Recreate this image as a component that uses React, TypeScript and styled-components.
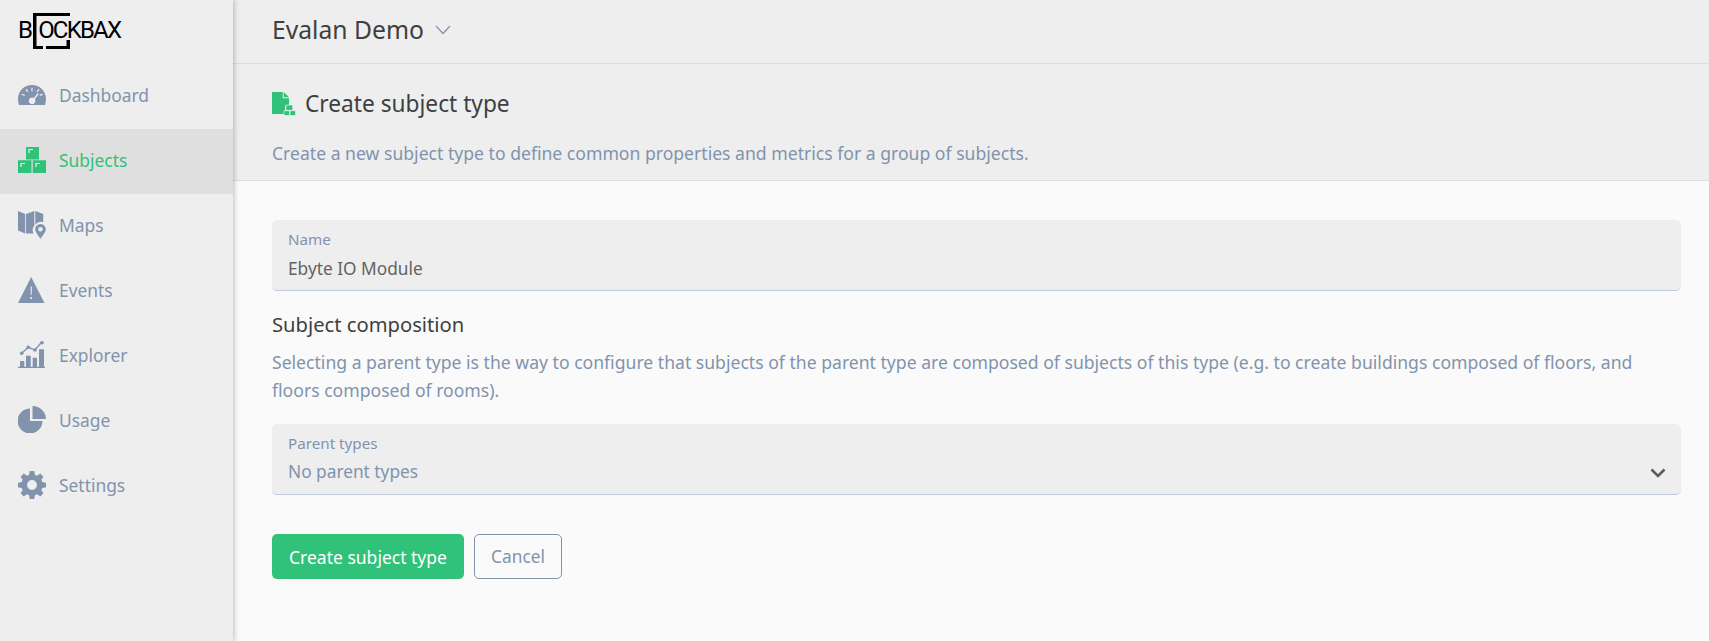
import React from 'react';
import styled, { createGlobalStyle } from 'styled-components';

const Global = createGlobalStyle`
	html, body {
		margin: 0;
		padding: 0;
		height: 100%;
		background: #fafafa;
		overflow: hidden;
	}
	* {
		box-sizing: border-box;
	}
	body {
		font-family: 'Noto Sans', 'Open Sans', sans-serif;
	}
`;

const GREY = '#8193ad';
const GREEN = '#2fc278';

const DashboardIcon = () => (
	<svg width='28' height='20' viewBox='0 0 28 20' fill='currentColor'>
		<path
			fillRule='evenodd'
			d='M14 0C6.3 0 0 6.2 0 13.8c0 2.2.4 4.2 1 6.2h26c.6-2 1-4 1-6.2C28 6.2 21.7 0 14 0zm-.6 2.8h1.200v3.400h-1.200zM7.400 4.400l1-.7 2 2.800-1 .7zm13.200-.7 1 .7-2 2.800-1-.7zM3.300 9.800l.4-1.100 3.200 1.100-.4 1.100zm21.400-1.100.4 1.100-3.200 1.100-.4-1.100zM15.900 13.100l3.700-5 1.100.8-3.700 5c.2.400.3.800.3 1.200a3.300 3.300 0 1 1-1.400-2z'
		/>
	</svg>
);

const SubjectsIcon = () => (
	<svg width='28' height='26' viewBox='0 0 28 26' fill='currentColor'>
		<path d='M8 0h13v12.500H8zM0 13.200h13.500V26H0zM14.700 13.200H28V26H14.700z' />
		<path
			d='M11 6V2.500h4M3 20v-3.500h4M18 20v-3.500h4'
			fill='none'
			stroke='#e6f5ec'
			strokeWidth='1.200'
		/>
	</svg>
);

const MapsIcon = () => (
	<svg width='28' height='28' viewBox='0 0 28 28' fill='currentColor'>
		<path d='M0 0l7.200 3v19.500L0 19.500zM8 3L16.300 0v14.600a7 7 0 0 0-.7 8L8 22.500zM17.300 0l7.900 3v8.200a7 7 0 0 0-7.900 2.800z' />
		<path
			fillRule='evenodd'
			d='M22.500 13a5.300 5.300 0 0 0-5.300 5.300c0 3 3.400 6.700 5.300 9.500 1.900-2.800 5.300-6.500 5.300-9.500A5.300 5.300 0 0 0 22.500 13zm0 3a2.300 2.300 0 1 1 0 4.600 2.300 2.300 0 0 1 0-4.600z'
		/>
	</svg>
);

const EventsIcon = () => (
	<svg width='27' height='26' viewBox='0 0 27 26' fill='currentColor'>
		<path
			fillRule='evenodd'
			d='M13.200 0L26.500 26H0zM12.600 9.500l.2 8.500h.9l.2-8.500zM13.200 20a1.100 1.100 0 1 0 0 2.200 1.100 1.100 0 0 0 0-2.200z'
		/>
	</svg>
);

const ExplorerIcon = () => (
	<svg width='28' height='27' viewBox='0 0 28 27' fill='currentColor'>
		<path d='M2 20h4.300v5.700H2zM8 14.700h4.700v11H8zM14.700 16.700H19v9h-4.300zM21 8.300h5v17.400h-5zM0 25.700h27V27H0z' />
		<path d='M3.700 12.300l6.600-6L17 9l6.700-8' fill='none' stroke='currentColor' strokeWidth='1.300' />
		<circle cx='3.700' cy='12.300' r='1.800' />
		<circle cx='10.300' cy='6.300' r='1.800' />
		<circle cx='17' cy='9' r='1.800' />
		<circle cx='24' cy='1.800' r='1.800' />
	</svg>
);

const UsageIcon = () => (
	<svg width='28' height='27' viewBox='0 0 28 27' fill='currentColor'>
		<path d='M12 2.500V15h12.500A12.500 12.500 0 1 1 12 2.500z' />
		<path d='M14.500 0A13.500 13.500 0 0 1 28 13h-13.500z' />
	</svg>
);

const SettingsIcon = () => (
	<svg width='28' height='28' viewBox='0 0 24 24' fill='currentColor'>
		<path
			fillRule='evenodd'
			d='M13.900 0l.6 3.200c.7.200 1.300.5 1.900.8l2.700-1.800 2.700 2.700-1.800 2.700c.3.600.6 1.200.8 1.900l3.200.6v3.800l-3.200.6c-.2.700-.5 1.300-.8 1.900l1.800 2.700-2.700 2.700-2.700-1.800c-.6.300-1.200.6-1.900.8l-.6 3.200h-3.800l-.6-3.200c-.7-.2-1.300-.5-1.900-.8l-2.700 1.800-2.700-2.700 1.800-2.700c-.3-.6-.6-1.200-.8-1.900L0 13.900v-3.800l3.200-.6c.2-.7.500-1.300.8-1.900L2.200 4.900l2.700-2.700 2.700 1.800c.6-.3 1.200-.6 1.900-.8l.6-3.200zM12 7.800a4.200 4.200 0 1 0 0 8.400 4.200 4.200 0 0 0 0-8.400z'
		/>
	</svg>
);

const NAV_ITEMS = [
	{ label: 'Dashboard', icon: <DashboardIcon /> },
	{ label: 'Subjects', icon: <SubjectsIcon />, active: true },
	{ label: 'Maps', icon: <MapsIcon /> },
	{ label: 'Events', icon: <EventsIcon /> },
	{ label: 'Explorer', icon: <ExplorerIcon /> },
	{ label: 'Usage', icon: <UsageIcon /> },
	{ label: 'Settings', icon: <SettingsIcon /> },
];

const App: React.FC = () => {
	return (
		<Page>
			<Global />
			<Sidebar>
				<Logo>
					<LogoBracket width='37' height='36' viewBox='0 0 37 36'>
						<path d='M0 0h37v3H3.500v30H10v3H0z' fill='#000' />
						<path d='M13 33h20.500v-6H37v9H13z' fill='#000' />
					</LogoBracket>
					<LogoText>B</LogoText>
					<LogoGap />
					<LogoText>OCKBAX</LogoText>
				</Logo>
				<Nav>
					{NAV_ITEMS.map(item => (
						<NavItem key={item.label} $active={item.active}>
							<NavIcon>{item.icon}</NavIcon>
							<NavLabel>{item.label}</NavLabel>
						</NavItem>
					))}
				</Nav>
			</Sidebar>
			<Main>
				<TopBar>
					<OrgName>Evalan Demo</OrgName>
					<svg width='16' height='10' viewBox='0 0 16 10' fill='none' stroke={GREY} strokeWidth='1.200'>
						<path d='M1 1l7 7.500L15 1' />
					</svg>
				</TopBar>
				<PageHeader>
					<TitleRow>
						<svg width='24' height='24' viewBox='0 0 24 24' fill={GREEN}>
							<path d='M0 0h10.700v6.300H17V14h-4v8H0z' />
							<path d='M11.700 0L17 5.300h-5.300z' />
							<path
								d='M14 13h6.700v5.300H14zM12 18.700h5.500v4.800H12zM18 18.700h5.500v4.800H18z'
								stroke='#eee'
								strokeWidth='.7'
							/>
						</svg>
						<Title>Create subject type</Title>
					</TitleRow>
					<Subtitle>
						Create a new subject type to define common properties and metrics for a group of subjects.
					</Subtitle>
				</PageHeader>
				<Content>
					<Field>
						<FieldLabel>Name</FieldLabel>
						<FieldValue>Ebyte IO Module</FieldValue>
					</Field>
					<SectionTitle>Subject composition</SectionTitle>
					<Help>
						Selecting a parent type is the way to configure that subjects of the parent type are composed of
						subjects of this type (e.g. to create buildings composed of floors, and floors composed of rooms).
					</Help>
					<SelectField>
						<FieldLabel>Parent types</FieldLabel>
						<FieldValue $placeholder>No parent types</FieldValue>
						<SelectArrow width='16' height='10' viewBox='0 0 16 10' fill='none' stroke='#5c5c5c' strokeWidth='2.600'>
							<path d='M1.500 1.500L8 8l6.500-6.500' />
						</SelectArrow>
					</SelectField>
					<Actions>
						<PrimaryButton>Create subject type</PrimaryButton>
						<OutlineButton>Cancel</OutlineButton>
					</Actions>
				</Content>
			</Main>
		</Page>
	);
};

export default App;

const Page = styled.div`
	display: flex;
	width: 100%;
	height: 100vh;
	background: #fafafa;
`;

const Sidebar = styled.aside`
	position: relative;
	z-index: 1;
	flex: 0 0 233px;
	background: #eee;
	box-shadow: 1px 0 5px rgba(0, 0, 0, 0.25);
`;

const Logo = styled.div`
	position: relative;
	display: flex;
	align-items: center;
	height: 56px;
	padding: 0 0 0 18px;
	color: #000;
`;

const LogoBracket = styled.svg`
	position: absolute;
	left: 33px;
	top: 13px;
`;

const LogoText = styled.span`
	font-family: 'Roboto', sans-serif;
	font-size: 24px;
	letter-spacing: -1.800px;
	line-height: 1;
	margin-top: 4px;
`;

const LogoGap = styled.span`
	width: 7px;
`;

const Nav = styled.nav`
	display: flex;
	flex-direction: column;
	margin-top: 8px;
`;

const NavItem = styled.div<{ $active?: boolean }>`
	display: flex;
	align-items: center;
	height: 65px;
	padding: 0 0 4px 18px;
	background: ${p => (p.$active ? '#dfdfdf' : 'transparent')};
	color: ${p => (p.$active ? GREEN : GREY)};
`;

const NavIcon = styled.span`
	display: flex;
	align-items: center;
	width: 41px;
`;

const NavLabel = styled.span`
	font-size: 17.400px;
`;

const Main = styled.main`
	flex: 1;
	display: flex;
	flex-direction: column;
	min-width: 0;
`;

const TopBar = styled.header`
	display: flex;
	align-items: center;
	gap: 11px;
	height: 64px;
	padding: 0 0 4px 39px;
	background: #eee;
	border-bottom: 1px solid #ddd;
`;

const OrgName = styled.div`
	font-size: 24.700px;
	color: #3f3f3f;
`;

const PageHeader = styled.section`
	height: 117px;
	padding: 25px 39px 0;
	background: #eee;
	border-bottom: 1px solid #ddd;
`;

const TitleRow = styled.div`
	display: flex;
	align-items: center;
	gap: 9px;
	height: 30px;
`;

const Title = styled.h1`
	margin: 0;
	font-size: 22.700px;
	line-height: 30px;
	font-weight: 400;
	color: #3f3f3f;
`;

const Subtitle = styled.p`
	margin: 22px 0 0;
	font-size: 17.600px;
	color: ${GREY};
`;

const Content = styled.section`
	flex: 1;
	padding: 39px 28px 0 39px;
	background: #fafafa;
`;

const Field = styled.div`
	position: relative;
	height: 71px;
	padding: 9px 16px 0;
	background: #eee;
	border-radius: 5px;
	border-bottom: 1px solid #c0cbdc;
`;

const SelectField = styled(Field)`
	margin-top: 20px;
`;

const FieldLabel = styled.div`
	font-size: 15.200px;
	line-height: 20px;
	color: ${GREY};
`;

const FieldValue = styled.div<{ $placeholder?: boolean }>`
	font-size: 17.300px;
	line-height: 27px;
	margin-top: ${p => (p.$placeholder ? '5px' : '6px')};
	color: ${p => (p.$placeholder ? GREY : '#636363')};
`;

const SelectArrow = styled.svg`
	position: absolute;
	right: 15px;
	bottom: 16px;
`;

const SectionTitle = styled.h2`
	margin: 19px 0 0;
	font-size: 20.200px;
	line-height: 28px;
	font-weight: 400;
	color: #3f3f3f;
`;

const Help = styled.p`
	margin: 10px 0 0;
	font-size: 17.600px;
	line-height: 28px;
	color: ${GREY};
`;

const Actions = styled.div`
	display: flex;
	gap: 10px;
	margin-top: 39px;
`;

const PrimaryButton = styled.button`
	height: 45px;
	width: 192px;
	border: 0;
	border-radius: 5px;
	background: ${GREEN};
	color: #fff;
	font: inherit;
	font-size: 17.500px;
`;

const OutlineButton = styled.button`
	height: 45px;
	width: 88px;
	border: 1px solid ${GREY};
	border-radius: 5px;
	background: transparent;
	color: ${GREY};
	font: inherit;
	font-size: 17.300px;
`;
